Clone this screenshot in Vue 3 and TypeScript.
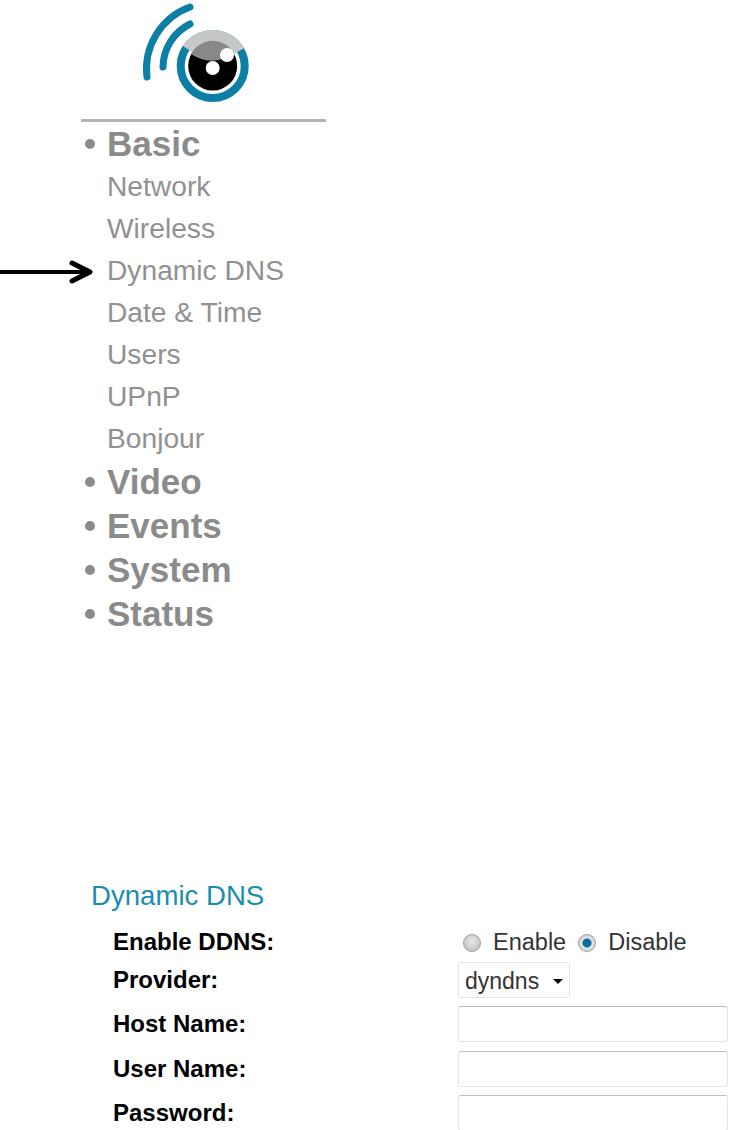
<script setup lang="ts">
import { ref } from 'vue'

interface MenuGroup {
  title: string
  items: string[]
}

const menu: MenuGroup[] = [
  { title: 'Basic', items: ['Network', 'Wireless', 'Dynamic DNS', 'Date & Time', 'Users', 'UPnP', 'Bonjour'] },
  { title: 'Video', items: [] },
  { title: 'Events', items: [] },
  { title: 'System', items: [] },
  { title: 'Status', items: [] },
]

const fields = ['Host Name:', 'User Name:', 'Password:']
const ddns = ref('disable')
const provider = ref('dyndns')
</script>

<template>
  <div class="page">
    <svg class="pointer" width="94" height="26" viewBox="0 0 94 26">
      <path d="M0 13H88" fill="none" stroke="#000" stroke-width="4" />
      <path d="M72 4L90 13L72 22" fill="none" stroke="#000" stroke-width="5" stroke-linecap="round" stroke-linejoin="round" />
    </svg>

    <div class="sidebar">
      <div class="logo">
        <svg width="150" height="116" viewBox="0 0 150 116">
          <path d="M27 77A66 66 0 0 1 70 7" fill="none" stroke="#0b7fa5" stroke-width="7" stroke-linecap="round" />
          <path d="M43 67A49 49 0 0 1 70 24" fill="none" stroke="#0b7fa5" stroke-width="7" stroke-linecap="round" />
          <circle cx="92.7" cy="66" r="32" fill="none" stroke="#0b7fa5" stroke-width="8" />
          <path d="M67.4 49A30.5 30.5 0 0 1 119.2 51" fill="none" stroke="#c6c8c8" stroke-width="11" />
          <circle cx="92.7" cy="66" r="24.5" fill="#000" />
          <path d="M71 54A24.5 24.5 0 0 1 114 53C100 63 85 63 71 54Z" fill="#888" />
          <circle cx="107" cy="55" r="7" fill="#fff" />
          <circle cx="92.7" cy="68" r="7" fill="#fff" />
        </svg>
      </div>
      <ul class="menu">
        <li v-for="group in menu" :key="group.title">
          <div class="group-title"><span class="dot"></span>{{ group.title }}</div>
          <a v-for="item in group.items" :key="item" class="menu-item">{{ item }}</a>
        </li>
      </ul>
    </div>

    <div class="section">
      <h2>Dynamic DNS</h2>
      <form class="form">
        <label class="field-label">Enable DDNS:</label>
        <div class="radios">
          <input v-model="ddns" type="radio" name="ddns" value="enable" id="ddns-on" />
          <label for="ddns-on">Enable</label>
          <input v-model="ddns" type="radio" name="ddns" value="disable" id="ddns-off" />
          <label for="ddns-off">Disable</label>
        </div>

        <label class="field-label">Provider:</label>
        <div class="select-wrap">
          <select v-model="provider">
            <option value="dyndns">dyndns</option>
          </select>
          <span class="caret"></span>
        </div>

        <template v-for="field in fields" :key="field">
          <label class="field-label">{{ field }}</label>
          <input class="text-input" type="text" />
        </template>
      </form>
    </div>
  </div>
</template>

<style scoped>
.page {
  position: relative;
  height: 1130px;
  overflow: hidden;
  background: #fff;
  font-family: "Liberation Sans", Arial, sans-serif;
}

.pointer {
  position: absolute;
  left: 0;
  top: 259px;
}

.sidebar {
  width: 245px;
  margin-left: 81px;
}

.logo {
  height: 122px;
  padding-left: 39px;
  box-sizing: border-box;
  border-bottom: 3px solid #b4b4b4;
}

.menu {
  list-style: none;
  margin: 0;
  padding: 0;
  color: #8b8b8b;
}

.group-title {
  display: flex;
  align-items: center;
  height: 44px;
  font-size: 35px;
  font-weight: bold;
}

.dot {
  width: 10px;
  height: 10px;
  margin: 0 12px 0 4px;
  border-radius: 50%;
  background: #8b8b8b;
}

.menu-item {
  display: block;
  height: 42px;
  line-height: 40px;
  padding-left: 26px;
  font-size: 28.2px;
  color: #919191;
}

.section {
  margin: 242px 0 0 91px;
}

h2 {
  margin: 0 0 15.5px;
  height: 36px;
  line-height: 36px;
  font-size: 27.6px;
  font-weight: normal;
  color: #1a8db0;
}

.form {
  display: grid;
  grid-template-columns: 345px 270px;
  grid-template-rows: 24px 35.5px 36px 36px 36px;
  row-gap: 8.5px;
  padding-left: 22px;
  align-items: center;
}

.field-label {
  font-size: 24px;
  font-weight: bold;
  color: #000;
}

.radios {
  display: flex;
  align-items: center;
  padding: 2px 0 0 5px;
  font-size: 23.5px;
  color: #333;
}

.radios input {
  appearance: none;
  width: 18px;
  height: 18px;
  margin: 0 12px 0 0;
  border: 1px solid #a0a0a0;
  border-radius: 50%;
  background: radial-gradient(circle at 50% 40%, #e8e8e8, #b8b8b8);
}

.radios input:checked {
  background: radial-gradient(circle, #0a6f9e 0 4px, #e6e6e6 5px, #bdbdbd 100%);
}

.radios label + input {
  margin-left: 12px;
}

.select-wrap {
  position: relative;
  width: 112px;
  height: 35.5px;
}

select {
  appearance: none;
  width: 100%;
  height: 100%;
  padding: 2px 0 0 6px;
  border: 1px solid #e2e4e8;
  border-radius: 3px;
  background: #fff;
  font-family: inherit;
  font-size: 23px;
  color: #333;
}

.caret {
  position: absolute;
  right: 7px;
  top: 17px;
  border-left: 5px solid transparent;
  border-right: 5px solid transparent;
  border-top: 5px solid #000;
  pointer-events: none;
}

.text-input {
  box-sizing: border-box;
  width: 270px;
  height: 36px;
  padding: 0 8px;
  border: 1px solid #e2e4e8;
  border-top-color: #bcbcc4;
  border-radius: 3px;
  background: #fff;
}
</style>
